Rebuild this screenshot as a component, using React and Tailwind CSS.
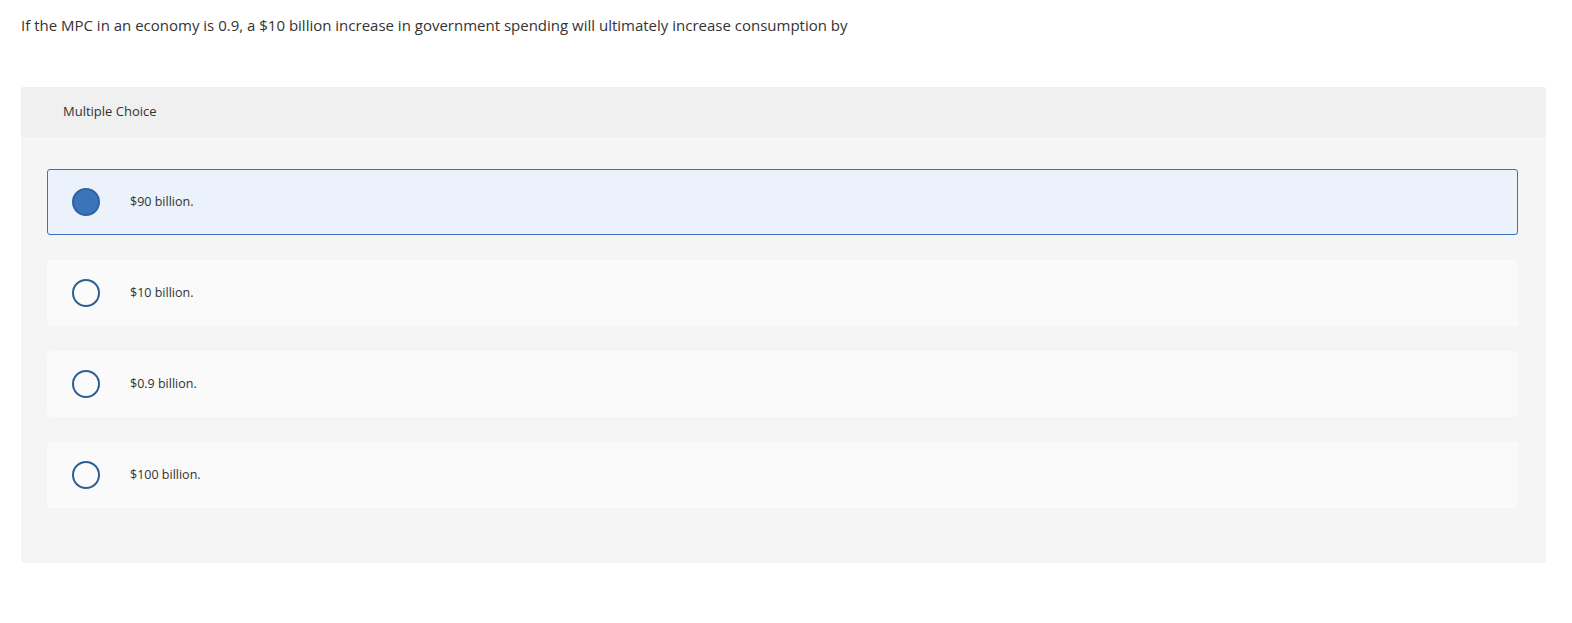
import React, { useState } from "react";

const options = ["$90 billion.", "$10 billion.", "$0.9 billion.", "$100 billion."];

const App = () => {
  const [selected, setSelected] = useState(0);

  return (
    <div
      className="min-h-[623px] bg-white text-[#333333]"
      style={{ fontFamily: "'Open Sans', 'Noto Sans', sans-serif" }}
    >
      {/* question */}
      <div className="pl-[21px] pt-[15px] text-[15px] leading-[20px]">
        If the MPC in an economy is 0.9, a $10 billion increase in government spending will ultimately increase consumption by
      </div>

      {/* answer panel */}
      <div className="ml-[21px] mr-[26px] mt-[52px] rounded-[3px] bg-[#f5f5f5]">
        <div className="flex h-[50px] items-center rounded-t-[3px] bg-[#f0f0f0] pl-[42px] text-[13px]">
          Multiple Choice
        </div>
        <div className="flex flex-col gap-[25px] pl-[26px] pr-[28px] pt-[32px] pb-[55px]">
          {options.map((opt, i) => (
            <div
              key={opt}
              onClick={() => setSelected(i)}
              className={
                i === selected
                  ? "flex h-[66px] cursor-pointer items-center rounded-[3px] border border-[#3a73b9] bg-[#ebf2fb] pl-[24px]"
                  : "flex h-[66px] cursor-pointer items-center rounded-[3px] border border-[#fafafa] bg-[#fafafa] pl-[24px]"
              }
            >
              <span
                className={
                  i === selected
                    ? "h-[28px] w-[28px] shrink-0 rounded-full border-2 border-[#2e64a3] bg-[#3b74b8]"
                    : "h-[28px] w-[28px] shrink-0 rounded-full border-2 border-[#2d5f97] bg-[#fbfbfb]"
                }
              />
              <span className="ml-[30px] text-[12.5px]">{opt}</span>
            </div>
          ))}
        </div>
      </div>
    </div>
  );
};

export default App;
